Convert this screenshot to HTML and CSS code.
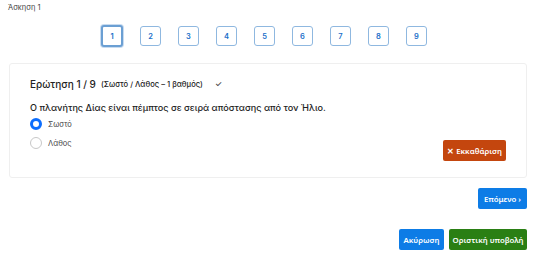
FILE: index.html
```html
<!DOCTYPE html>
<html lang="el">
<head>
<meta charset="utf-8">
<link rel="stylesheet" href="styles.css">
</head>
<body>
<div class="page">
  <div class="crumb">Άσκηση 1</div>
  <nav class="qnav">
    <button class="qbox active">1</button>
    <button class="qbox">2</button>
    <button class="qbox">3</button>
    <button class="qbox">4</button>
    <button class="qbox">5</button>
    <button class="qbox">6</button>
    <button class="qbox">7</button>
    <button class="qbox">8</button>
    <button class="qbox">9</button>
  </nav>
  <section class="card">
    <h2 class="qtitle">Ερώτηση 1 / 9 <span class="qmeta">(Σωστό / Λάθος – 1 βαθμός)</span> <span class="check">✓</span></h2>
    <p class="qtext">Ο πλανήτης Δίας είναι πέμπτος σε σειρά απόστασης από τον Ήλιο.</p>
    <div class="answers">
      <div class="opts">
        <label class="opt"><span class="radio checked"></span>Σωστό</label>
        <label class="opt"><span class="radio"></span>Λάθος</label>
      </div>
      <button class="btn btn-clear">✕ Εκκαθάριση</button>
    </div>
  </section>
  <div class="row next-row">
    <button class="btn btn-blue btn-next">Επόμενο ›</button>
  </div>
  <div class="row final-row">
    <button class="btn btn-blue">Ακύρωση</button>
    <button class="btn btn-green">Οριστική υποβολή</button>
  </div>
</div>
</body>
</html>
```
FILE: styles.css
```css
* { box-sizing: border-box; }
html, body { margin: 0; padding: 0; background: #fff; }
body { font-family: "Inter", "Noto Sans", sans-serif; color: #222; }
.page { width: 518px; margin-left: 9px; padding-top: 3px; }
.crumb { font-size: 7.5px; color: #444; line-height: 10px; margin-left: -1px; }
.qnav { display: flex; justify-content: center; gap: 17px; margin-top: 13px; padding-right: 8px; }
.qbox {
  width: 21px; height: 20px; padding: 0;
  border: 1px solid #8fb8e0; border-radius: 3px; background: #fff;
  color: #1a6fc9; font: 600 7.5px "Inter", sans-serif;
}
.qbox.active { border: 2px solid #6b9fd3; width: 22px; height: 22px; margin-top: -1px; box-shadow: 0 0 0 1px #c9dcf0; }
.card {
  margin-top: 16px; border: 1px solid #efefef; border-radius: 3px;
  padding: 14px 20px 16px 20px; height: 115px;
  display: flex; flex-direction: column;
}
.qtitle { margin: 0; font-size: 10px; font-weight: 500; color: #222; display: flex; align-items: center; gap: 5px; }
.qmeta { font-size: 7.6px; font-weight: 500; }
.check { font-size: 8px; margin-left: 7px; color: #444; }
.qtext { margin: 12px 0 0; font-size: 9.1px; font-weight: 500; color: #222; }
.answers { flex: 1; display: flex; justify-content: space-between; align-items: flex-end; }
.opts { align-self: flex-start; display: flex; flex-direction: column; gap: 7px; margin-top: 5px; }
.opt { display: flex; align-items: center; gap: 6px; font-size: 7.5px; color: #444; height: 12px; }
.radio { width: 12px; height: 12px; border-radius: 50%; border: 1px solid #c8c8c8; background: #fff; }
.radio.checked { border: 3.5px solid #0d6efd; }
.btn {
  border: 0; border-radius: 2px; color: #fff; font: 600 7.8px "Noto Sans", sans-serif;
  height: 21px; padding: 0 8px; cursor: pointer;
}
.btn-clear { background: #c4460e; width: 63px; padding: 0; }
.btn-blue { background: #0d7ce6; }
.btn-green { background: #2a7f14; }
.row { display: flex; justify-content: flex-end; gap: 5px; }
.next-row { margin-top: 10px; }
.btn-next { width: 49px; padding: 0; }
.final-row { margin-top: 20px; }
.final-row .btn-blue { width: 45px; padding: 0; }
.final-row .btn-green { width: 78px; padding: 0; }
```
